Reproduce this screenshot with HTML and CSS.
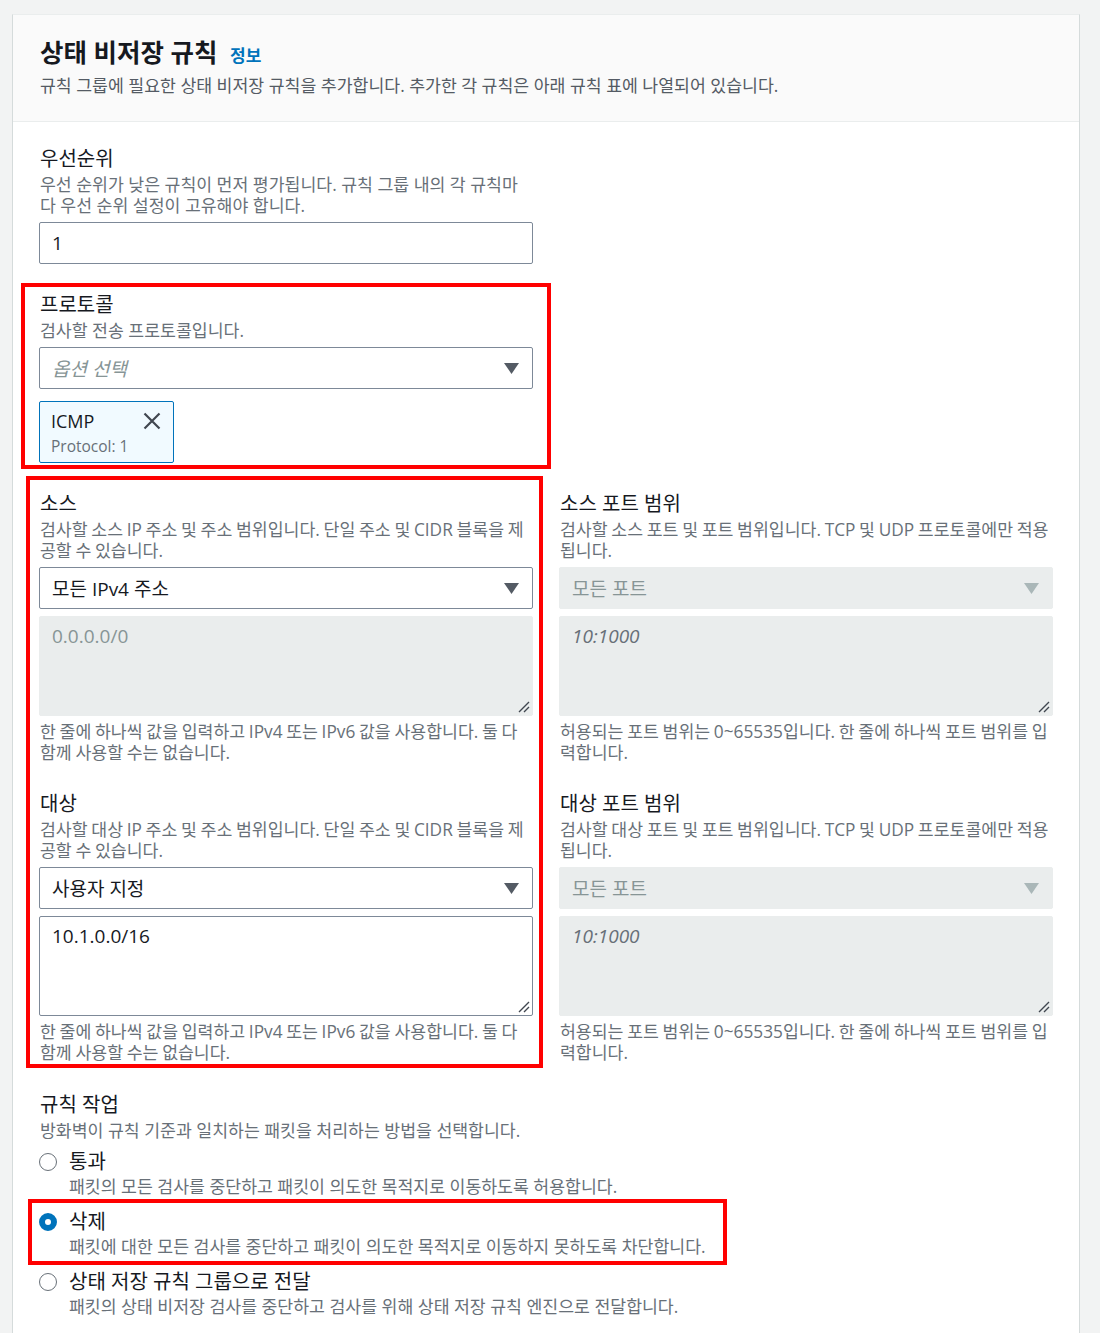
FILE: index.html
```html
<!DOCTYPE html>
<html lang="ko">
<head>
<meta charset="utf-8">
<title>상태 비저장 규칙</title>
<link rel="stylesheet" href="styles.css">
</head>
<body>
<div class="card">
  <div class="card-header">
    <h2 class="title">상태 비저장 규칙 <a class="info" href="#">정보</a></h2>
    <p class="subtitle">규칙 그룹에 필요한 상태 비저장 규칙을 추가합니다. 추가한 각 규칙은 아래 규칙 표에 나열되어 있습니다.</p>
  </div>
  <div class="card-body">
    <div class="form-grid">
      <div class="field col1">
        <div class="label">우선순위</div>
        <div class="desc">우선 순위가 낮은 규칙이 먼저 평가됩니다. 규칙 그룹 내의 각 규칙마다 우선 순위 설정이 고유해야 합니다.</div>
        <div class="input">1</div>
      </div>

      <div class="field col1">
        <div class="label">프로토콜</div>
        <div class="desc">검사할 전송 프로토콜입니다.</div>
        <div class="select"><span class="placeholder">옵션 선택</span><svg class="caret" width="15" height="11" viewBox="0 0 15 11"><path d="M0 0H15L7.5 11Z"/></svg></div>
        <div class="token">
          <div class="token-text">
            <div class="token-name">ICMP</div>
            <div class="token-sub">Protocol: 1</div>
          </div>
          <svg class="token-x" width="18" height="18" viewBox="0 0 18 18"><path d="M1.5 1.5L16.5 16.5M16.5 1.5L1.5 16.5"/></svg>
        </div>
      </div>

      <div class="field col1 row3">
        <div class="label">소스</div>
        <div class="desc mixed">검사할 소스 IP 주소 및 주소 범위입니다. 단일 주소 및 CIDR 블록을 제공할 수 있습니다.</div>
        <div class="select"><span>모든 IPv4 주소</span><svg class="caret" width="15" height="11" viewBox="0 0 15 11"><path d="M0 0H15L7.5 11Z"/></svg></div>
        <div class="area-wrap">
          <textarea class="area disabled" readonly>0.0.0.0/0</textarea>
          <svg class="grip" width="12" height="12" viewBox="0 0 12 12"><path d="M11 1L1 11M11 6L6 11"/></svg>
        </div>
        <div class="desc mixed hint">한 줄에 하나씩 값을 입력하고 IPv4 또는 IPv6 값을 사용합니다. 둘 다 함께 사용할 수는 없습니다.</div>
      </div>

      <div class="field col2 row3">
        <div class="label">소스 포트 범위</div>
        <div class="desc mixed">검사할 소스 포트 및 포트 범위입니다. TCP 및 UDP 프로토콜에만 적용됩니다.</div>
        <div class="select disabled"><span>모든 포트</span><svg class="caret" width="15" height="11" viewBox="0 0 15 11"><path d="M0 0H15L7.5 11Z"/></svg></div>
        <div class="area-wrap">
          <textarea class="area disabled" readonly placeholder="10:1000"></textarea>
          <svg class="grip" width="12" height="12" viewBox="0 0 12 12"><path d="M11 1L1 11M11 6L6 11"/></svg>
        </div>
        <div class="desc mixed hint">허용되는 포트 범위는 0~65535입니다. 한 줄에 하나씩 포트 범위를 입력합니다.</div>
      </div>

      <div class="field col1 row4">
        <div class="label">대상</div>
        <div class="desc mixed">검사할 대상 IP 주소 및 주소 범위입니다. 단일 주소 및 CIDR 블록을 제공할 수 있습니다.</div>
        <div class="select"><span>사용자 지정</span><svg class="caret" width="15" height="11" viewBox="0 0 15 11"><path d="M0 0H15L7.5 11Z"/></svg></div>
        <div class="area-wrap">
          <textarea class="area" readonly>10.1.0.0/16</textarea>
          <svg class="grip" width="12" height="12" viewBox="0 0 12 12"><path d="M11 1L1 11M11 6L6 11"/></svg>
        </div>
        <div class="desc mixed hint">한 줄에 하나씩 값을 입력하고 IPv4 또는 IPv6 값을 사용합니다. 둘 다 함께 사용할 수는 없습니다.</div>
      </div>

      <div class="field col2 row4">
        <div class="label">대상 포트 범위</div>
        <div class="desc mixed">검사할 대상 포트 및 포트 범위입니다. TCP 및 UDP 프로토콜에만 적용됩니다.</div>
        <div class="select disabled"><span>모든 포트</span><svg class="caret" width="15" height="11" viewBox="0 0 15 11"><path d="M0 0H15L7.5 11Z"/></svg></div>
        <div class="area-wrap">
          <textarea class="area disabled" readonly placeholder="10:1000"></textarea>
          <svg class="grip" width="12" height="12" viewBox="0 0 12 12"><path d="M11 1L1 11M11 6L6 11"/></svg>
        </div>
        <div class="desc mixed hint">허용되는 포트 범위는 0~65535입니다. 한 줄에 하나씩 포트 범위를 입력합니다.</div>
      </div>

      <div class="field span2">
        <div class="label">규칙 작업</div>
        <div class="desc">방화벽이 규칙 기준과 일치하는 패킷을 처리하는 방법을 선택합니다.</div>
        <div class="radios">
          <div class="radio">
            <span class="dot"></span>
            <div>
              <div class="radio-label">통과</div>
              <div class="desc">패킷의 모든 검사를 중단하고 패킷이 의도한 목적지로 이동하도록 허용합니다.</div>
            </div>
          </div>
          <div class="radio">
            <span class="dot checked"></span>
            <div>
              <div class="radio-label">삭제</div>
              <div class="desc">패킷에 대한 모든 검사를 중단하고 패킷이 의도한 목적지로 이동하지 못하도록 차단합니다.</div>
            </div>
          </div>
          <div class="radio">
            <span class="dot"></span>
            <div>
              <div class="radio-label">상태 저장 규칙 그룹으로 전달</div>
              <div class="desc">패킷의 상태 비저장 검사를 중단하고 검사를 위해 상태 저장 규칙 엔진으로 전달합니다.</div>
            </div>
          </div>
        </div>
      </div>
    </div>

    <div class="mark mark-protocol"></div>
    <div class="mark mark-source"></div>
    <div class="mark mark-drop"></div>
  </div>
</div>
</body>
</html>
```

FILE: styles.css
```css
html, body {
  margin: 0;
  padding: 0;
}
body {
  background: #f2f3f3;
  padding: 14px 0 0 12px;
  font-family: "Open Sans", "Noto Sans CJK KR", sans-serif;
  color: #16191f;
  height: 1333px;
  box-sizing: border-box;
  overflow: hidden;
}
.card {
  width: 1068px;
  box-sizing: border-box;
  background: #fff;
  border-left: 1px solid #d5dbdb;
  border-right: 1px solid #d5dbdb;
  border-top: 1px solid #eaeded;
  min-height: 1400px;
}
.card-header {
  background: #fafafa;
  border-bottom: 1px solid #eaeded;
  padding: 22px 26px 0 27px;
  height: 107px;
  box-sizing: border-box;
}
.title {
  margin: 0;
  font-size: 25.5px;
  line-height: 30px;
  font-weight: 700;
  color: #16191f;
}
.info {
  font-size: 17px;
  font-weight: 700;
  color: #0073bb;
  text-decoration: none;
  margin-left: 6px;
}
.subtitle {
  margin: 4px 0 0;
  font-size: 17.25px;
  line-height: 21px;
  color: #545b64;
}
.card-body {
  position: relative;
  padding: 25px 0 0 26px;
}
.form-grid {
  display: grid;
  grid-template-columns: 494px 494px;
  column-gap: 26px;
  row-gap: 29px;
}
.col1 { grid-column: 1; }
.col2 { grid-column: 2; }
.row3 { grid-row: 3; }
.row4 { grid-row: 4; }
.span2 { grid-column: 1 / span 2; margin-top: 1px; }
.field {
  display: flex;
  flex-direction: column;
}
.label {
  font-size: 20px;
  line-height: 24px;
  padding-left: 1px;
  margin-bottom: 3px;
}
.desc {
  font-size: 17.25px;
  line-height: 21px;
  color: #687078;
  padding-left: 1px;
  margin-bottom: 6px;
}
.desc.mixed {
  word-spacing: -0.8px;
}
.desc.hint {
  margin-top: 5px;
  margin-bottom: 0;
}
.input, .select {
  height: 42px;
  box-sizing: border-box;
  border: 1px solid #7d8998;
  border-radius: 2px;
  padding: 0 13px 0 12px;
  display: flex;
  align-items: center;
  font-size: 19px;
  color: #16191f;
}
.select {
  justify-content: space-between;
}
.caret path { fill: #545b64; }
.select.disabled {
  background: #eaeded;
  border-color: #eaeded;
  color: #879596;
}
.select.disabled .caret path { fill: #aab7b8; }
.placeholder {
  font-style: italic;
  color: #879596;
}
.token {
  margin-top: 12px;
  width: 135px;
  height: 62px;
  box-sizing: border-box;
  border: 1px solid #0073bb;
  border-radius: 2px;
  background: #f1faff;
  display: flex;
  justify-content: space-between;
  padding: 6px 12px 0 11px;
}
.token-name {
  font-size: 18px;
  line-height: 26px;
  color: #16191f;
}
.token-sub {
  font-size: 15.5px;
  line-height: 24px;
  color: #687078;
}
.token-x {
  margin-top: 4px;
}
.token-x path {
  stroke: #414750;
  stroke-width: 2.2;
  fill: none;
}
.area-wrap {
  position: relative;
  margin-top: 7px;
  display: flex;
}
.area {
  flex: 1;
  margin: 0;
  height: 100px;
  box-sizing: border-box;
  border: 1px solid #7d8998;
  border-radius: 2px;
  padding: 7px 12px;
  font-family: "Open Sans", "Noto Sans CJK KR", sans-serif;
  font-size: 19px;
  line-height: 24px;
  color: #16191f;
  resize: none;
  outline: none;
  background: #fff;
}
.area.disabled {
  background: #eaeded;
  border-color: #eaeded;
  color: #879596;
}
.area::placeholder {
  font-style: italic;
  color: #687078;
}
.grip {
  position: absolute;
  right: 3px;
  bottom: 3px;
}
.grip path {
  stroke: #414750;
  stroke-width: 1.4;
  fill: none;
}
.radios {
  display: flex;
  flex-direction: column;
  gap: 12px;
  margin-top: 2px;
}
.radio {
  display: flex;
  gap: 12px;
}
.radio .desc { margin-bottom: 0; padding-left: 0; }
.radio-label {
  font-size: 20px;
  line-height: 25px;
  margin-bottom: 2px;
}
.dot {
  width: 18px;
  height: 18px;
  box-sizing: border-box;
  border-radius: 50%;
  border: 1.5px solid #687078;
  margin-top: 4px;
  flex: none;
}
.dot.checked {
  border: 6px solid #0073bb;
  background: #fff;
}
.mark {
  position: absolute;
  border: 4px solid #ff0000;
  box-sizing: border-box;
  pointer-events: none;
}
.mark-protocol { left: 8px; top: 161px; width: 530px; height: 186px; }
.mark-source { left: 13px; top: 354px; width: 517px; height: 592px; }
.mark-drop { left: 15px; top: 1077px; width: 699px; height: 66px; }
```
